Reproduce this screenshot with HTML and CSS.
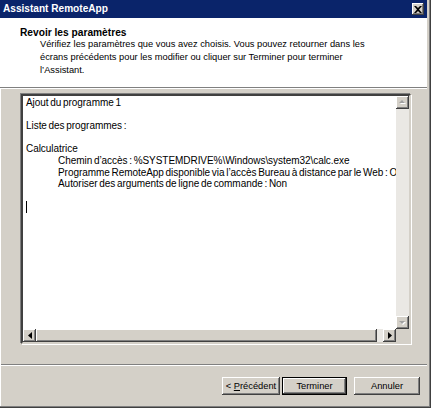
FILE: index.html
```html
<!DOCTYPE html>
<html lang="fr">
<head>
<meta charset="utf-8">
<title>Assistant RemoteApp</title>
<link rel="stylesheet" href="styles.css">
</head>
<body>
<div class="window">
  <div class="titlebar">
    <span class="title">Assistant RemoteApp</span>
    <span class="close">
      <svg width="8" height="7" viewBox="0 0 8 7"><path d="M0 0h2l2 2 2-2h2L5 3.5 8 7H6L4 5 2 7H0l3-3.5z" fill="#000"/></svg>
    </span>
  </div>
  <div class="header">
    <div class="h-title">Revoir les paramètres</div>
    <div class="h-desc">Vérifiez les paramètres que vous avez choisis. Vous pouvez retourner dans les<br>écrans précédents pour les modifier ou cliquer sur Terminer pour terminer<br>l’Assistant.</div>
  </div>
  <div class="main">
    <div class="textbox">
      <div class="text"><div class="line">Ajout du programme 1</div><div class="line">&nbsp;</div><div class="line">Liste des programmes :</div><div class="line">&nbsp;</div><div class="line">Calculatrice</div><div class="line indent">Chemin d’accès : %SYSTEMDRIVE%\Windows\system32\calc.exe</div><div class="line indent">Programme RemoteApp disponible via l’accès Bureau à distance par le Web : Oui</div><div class="line indent">Autoriser des arguments de ligne de commande : Non</div><div class="line">&nbsp;</div><div class="line"><span class="caret"></span></div></div>
      <div class="vscroll">
        <div class="sbtn"><svg width="7" height="5" viewBox="0 0 7 5"><path d="M1 4h6L4 1z" fill="#fff"/><path d="M0 3h6L3 0z" fill="#a0a0a0"/></svg></div>
        <div class="track"></div>
        <div class="sbtn"><svg width="7" height="5" viewBox="0 0 7 5"><path d="M1 2h6L4 5z" fill="#fff"/><path d="M0 1h6L3 4z" fill="#a0a0a0"/></svg></div>
      </div>
      <div class="hscroll">
        <div class="sbtn"><svg width="4" height="7" viewBox="0 0 4 7"><path d="M4 0v7L0 3.5z" fill="#000"/></svg></div>
        <div class="thumb"></div>
        <div class="htrack"></div>
        <div class="sbtn"><svg width="4" height="7" viewBox="0 0 4 7"><path d="M0 0v7l4-3.5z" fill="#000"/></svg></div>
      </div>
      <div class="corner"></div>
    </div>
  </div>
  <div class="separator"></div>
  <div class="buttons">
    <span class="btn btn-back"><span>&lt; <u>P</u>récédent</span></span>
    <span class="btn btn-default"><span>Terminer</span></span>
    <span class="btn btn-cancel"><span>Annuler</span></span>
  </div>
</div>
</body>
</html>
```
FILE: styles.css
```css
* { box-sizing: border-box; }
html, body { margin: 0; padding: 0; }
body {
  width: 431px;
  height: 408px;
  overflow: hidden;
  background: #d4d0c8;
  font-family: "Liberation Sans", Arial, sans-serif;
}
.window {
  width: 431px;
  height: 408px;
  background: #d4d0c8;
  display: flex;
  flex-direction: column;
  padding: 0 4px 3px 0;
  box-shadow: inset -1px -1px #404040, inset -2px -2px #808080, inset 1px 0 #fff;
}
.titlebar {
  height: 18px;
  flex: none;
  background: #0a246a;
  display: flex;
  align-items: center;
  justify-content: space-between;
  padding: 0 3px 0 3px;
}
.title {
  color: #fff;
  font-weight: bold;
  font-size: 10.1px;
  line-height: 12px;
}
.close {
  width: 12px;
  height: 12px;
  background: #d4d0c8;
  box-shadow: inset -1px -1px #404040, inset 1px 1px #fff, inset -2px -2px #808080;
  display: flex;
  align-items: center;
  justify-content: center;
}
.close svg { display: block; }
.header {
  height: 70px;
  flex: none;
  background: #fff;
  border-bottom: 1px solid #808080;
  box-shadow: 0 1px #fff;
  padding: 9px 0 0 20px;
  color: #000;
}
.h-title {
  font-weight: bold;
  font-size: 10.2px;
  line-height: 11px;
}
.h-desc {
  padding-left: 20px;
  font-size: 9.3px;
  line-height: 13px;
}
.main {
  flex: none;
  padding: 6px 0 0 21px;
}
.textbox {
  width: 390px;
  height: 250px;
  display: grid;
  grid-template-columns: 1fr 13px;
  grid-template-rows: 1fr 13px;
  border: 2px solid;
  border-color: #404040 #d4d0c8 #d4d0c8 #404040;
  box-shadow: -1px -1px #808080, 1px 1px #fff;
  background: #fff;
}
.text {
  overflow: hidden;
  padding: 1px 0 0 3px;
  font-size: 10px;
  line-height: 11.6px;
  word-spacing: -1px;
  letter-spacing: -0.05px;
  white-space: pre;
  color: #000;
}
.indent { padding-left: 32px; }
.caret {
  display: inline-block;
  width: 1px;
  height: 12px;
  background: #000;
  vertical-align: 3px;
}
.vscroll {
  display: flex;
  flex-direction: column;
  background: #eae8e4;
}
.track { flex: 1; }
.sbtn {
  width: 13px;
  height: 13px;
  flex: none;
  background: #d4d0c8;
  box-shadow: inset -1px -1px #404040, inset 1px 1px #fff, inset -2px -2px #808080;
  display: flex;
  align-items: center;
  justify-content: center;
}
.sbtn svg { display: block; }
.hscroll {
  display: flex;
  background: #eae8e4;
}
.thumb {
  flex: 1;
  background: #d4d0c8;
  box-shadow: inset -1px -1px #404040, inset 1px 1px #fff, inset -2px -2px #808080;
}
.htrack { width: 6px; flex: none; }
.corner { background: #d4d0c8; }
.separator {
  flex: none;
  margin: 20px 0 0 1px;
  height: 2px;
  border-top: 1px solid #808080;
  border-bottom: 1px solid #fff;
}
.buttons {
  flex: none;
  display: flex;
  justify-content: flex-end;
  padding: 11px 7px 0 0;
}
.btn {
  height: 18px;
  display: flex;
  align-items: center;
  justify-content: center;
  font-size: 9.3px;
  color: #000;
  background: #d4d0c8;
  box-shadow: inset -1px -1px #404040, inset 1px 1px #fff, inset -2px -2px #808080;
}
.btn-back { width: 58px; }
.btn-default {
  width: 65px;
  margin-left: 2px;
  border: 1px solid #000;
}
.btn-cancel { width: 66px; margin-left: 7px; }
```
